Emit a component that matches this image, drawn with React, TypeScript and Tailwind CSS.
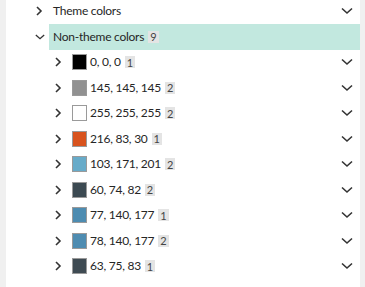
const colors: { rgb: [number, number, number]; count: number }[] = [
  { rgb: [0, 0, 0], count: 1 },
  { rgb: [145, 145, 145], count: 2 },
  { rgb: [255, 255, 255], count: 2 },
  { rgb: [216, 83, 30], count: 1 },
  { rgb: [103, 171, 201], count: 2 },
  { rgb: [60, 74, 82], count: 2 },
  { rgb: [77, 140, 177], count: 1 },
  { rgb: [78, 140, 177], count: 2 },
  { rgb: [63, 75, 83], count: 1 },
];

function Badge({ n }: { n: number }) {
  return (
    <span className="ml-[4px] inline-flex h-[12px] items-center bg-[#e4e4e4] px-[2px] text-[11px] leading-none tracking-normal text-[#444]">
      {n}
    </span>
  );
}

function Right() {
  return (
    <svg width="8" height="10" viewBox="0 0 8 10" className="shrink-0">
      <polyline points="2,1 6,5 2,9" fill="none" stroke="#333" strokeWidth="1.6" />
    </svg>
  );
}

function Down({ w = 12 }: { w?: number }) {
  return (
    <svg width={w} height="8" viewBox="0 0 12 8" className="shrink-0">
      <polyline points="1,1.5 6,6 11,1.5" fill="none" stroke="#333" strokeWidth="1.6" />
    </svg>
  );
}

export default function App() {
  return (
    <div
      className="flex h-[287px] w-[365px] overflow-hidden bg-white text-[12px] tracking-[-0.25px] text-[#262626]"
      style={{ fontFamily: 'Lato, "Open Sans", sans-serif' }}
    >
      <div className="w-[6px] shrink-0 bg-[#f0f0f0]" />
      <div className="mt-[-1.5px] flex-1">
        <div className="flex h-[25.5px] items-center pl-[29px]">
          <Right />
          <span className="ml-[10px] flex-1">Theme colors</span>
          <span className="mr-[7px]">
            <Down />
          </span>
        </div>
        <div className="flex h-[25.5px] items-center pl-[29px]">
          <Down w={10} />
          <div className="ml-[4px] flex h-full flex-1 items-center bg-[#c2e8df] pl-[4px]">
            <span>Non-theme colors</span>
            <Badge n={9} />
          </div>
        </div>
        {colors.map((c, i) => (
          <div key={i} className="flex h-[25.5px] items-center pl-[48px]">
            <Right />
            <span
              className="ml-[10px] h-[16px] w-[15px] border border-[#9a9a9a]"
              style={{ backgroundColor: `rgb(${c.rgb.join(",")})` }}
            />
            <span className="ml-[3px]">{c.rgb.join(", ")}</span>
            <Badge n={c.count} />
            <span className="ml-auto mr-[7px]">
              <Down />
            </span>
          </div>
        ))}
      </div>
      <div className="w-[5px] shrink-0 bg-[#f0f0f0]" />
    </div>
  );
}
